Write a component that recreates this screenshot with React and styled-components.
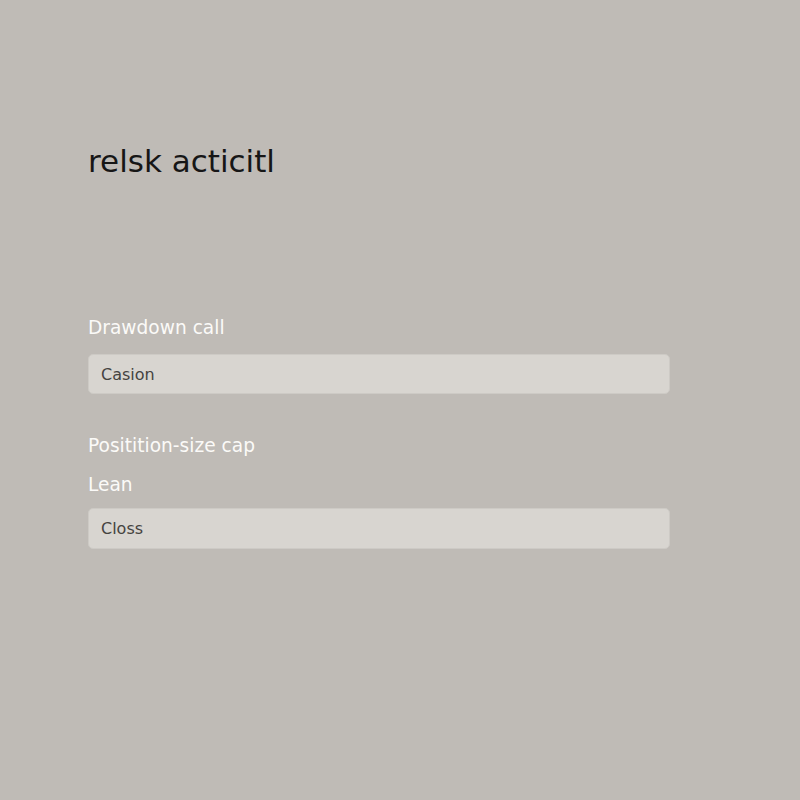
import React from 'react';
import styled, { createGlobalStyle } from 'styled-components';

const GlobalStyle = createGlobalStyle`
  html, body {
    margin: 0;
    padding: 0;
    background: #bfbbb6;
  }
  body {
    font-family: "DejaVu Sans", "Noto Sans", sans-serif;
  }
`

const Page = styled.main`
  width: 800px;
  height: 800px;
  box-sizing: border-box;
  padding: 143px 130px 0 88px;
  background: #bfbbb6;
`
const Title = styled.h1`
  margin: 0 0 138px 0;
  font-size: 31px;
  line-height: 36px;
  font-weight: 400;
  color: #161616;
`
const Label = styled.label`
  display: block;
  font-size: 18.6px;
  line-height: 22px;
  color: #fbfaf8;
  margin-bottom: ${props => props.gap || 0}px;
`
const Field = styled.div`
  height: ${props => props.tall ? 41 : 40}px;
  box-sizing: border-box;
  display: flex;
  align-items: center;
  padding: 0 12px;
  border-radius: 5px;
  background: #d8d5d0;
  border: 1px solid #cdcac5;
  font-size: 16px;
  color: #454340;
  margin-bottom: ${props => props.gap || 0}px;
`

export default () => {
  return (
    <Page>
      <GlobalStyle />
      <Title>relsk acticitl</Title>
      <Label gap={15}>Drawdown call</Label>
      <Field gap={41}>Casion</Field>
      <Label gap={17}>Positition-size cap</Label>
      <Label gap={12}>Lean</Label>
      <Field tall>Closs</Field>
    </Page>
  )
}
